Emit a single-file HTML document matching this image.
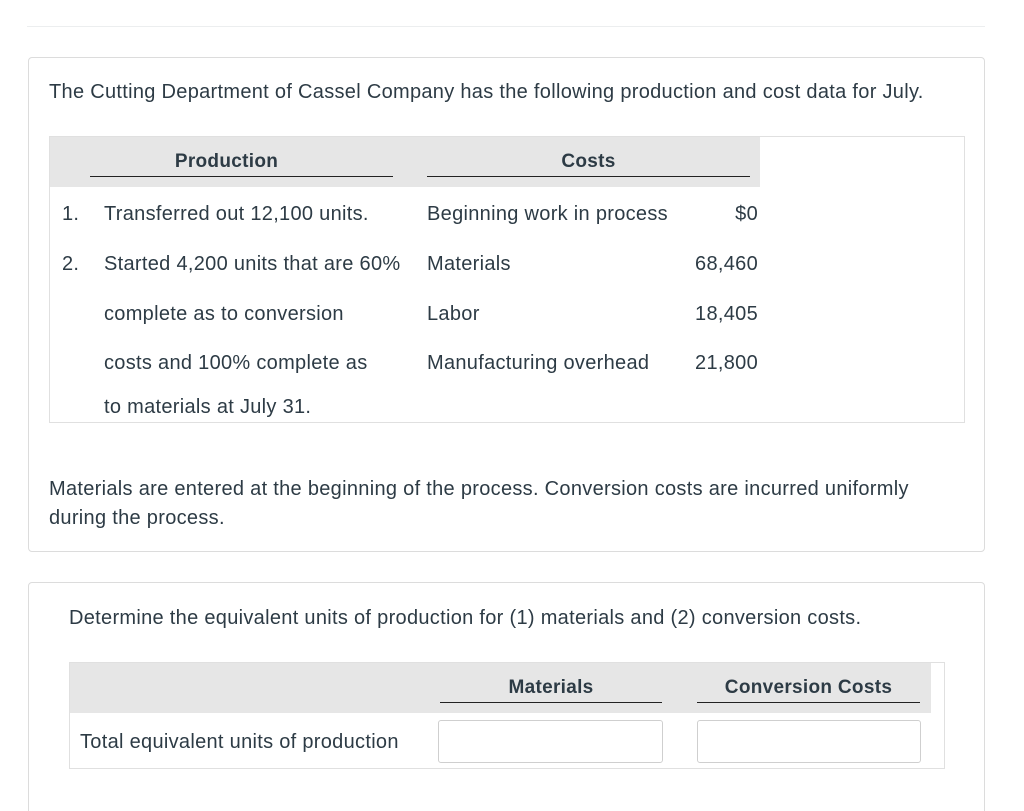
<!DOCTYPE html>
<html><head><style>
html,body{margin:0;width:1024px;height:811px;overflow:hidden;}
body{background:#fff;position:relative;font-family:"Liberation Sans",sans-serif;color:#2d3b45;}
.a{position:absolute;white-space:nowrap;font-size:20px;letter-spacing:0.3px;line-height:20px;}
.b{font-weight:bold;font-size:19px;letter-spacing:0.3px;}
.box{position:absolute;box-sizing:border-box;}
.r{text-align:right;}
</style></head><body>
<div class="box" style="left:27px;top:26px;width:958px;height:1px;background:#eceeef"></div>
<div class="box" style="left:28px;top:57px;width:957px;height:495px;border:1px solid #dcdcdc;border-radius:4px"></div>
<div class="a" style="left:49px;top:82px">The Cutting Department of Cassel Company has the following production and cost data for July.</div>
<div class="box" style="left:49px;top:136px;width:916px;height:287px;border:1px solid #e0e0e0"></div>
<div class="box" style="left:50px;top:137px;width:710px;height:50px;background:#e6e6e6"></div>
<div class="box" style="left:90px;top:176px;width:303px;height:1px;background:#222"></div>
<div class="box" style="left:427px;top:176px;width:323px;height:1px;background:#222"></div>
<div class="a b" style="left:75px;width:303px;text-align:center;top:152px">Production</div>
<div class="a b" style="left:427px;width:323px;text-align:center;top:152px">Costs</div>
<div class="a" style="left:62px;top:204px">1.</div>
<div class="a" style="left:104px;top:204px">Transferred out 12,100 units.</div>
<div class="a" style="left:62px;top:254px">2.</div>
<div class="a" style="left:104px;top:254px">Started 4,200 units that are 60%</div>
<div class="a" style="left:104px;top:304px">complete as to conversion</div>
<div class="a" style="left:104px;top:353px">costs and 100% complete as</div>
<div class="a" style="left:104px;top:397px">to materials at July 31.</div>
<div class="a" style="left:427px;top:204px">Beginning work in process</div>
<div class="a" style="left:427px;top:254px">Materials</div>
<div class="a" style="left:427px;top:304px">Labor</div>
<div class="a" style="left:427px;top:353px">Manufacturing overhead</div>
<div class="a r" style="left:660px;width:98px;top:204px">$0</div>
<div class="a r" style="left:660px;width:98px;top:254px">68,460</div>
<div class="a r" style="left:660px;width:98px;top:304px">18,405</div>
<div class="a r" style="left:660px;width:98px;top:353px">21,800</div>
<div class="a" style="left:49px;top:479px">Materials are entered at the beginning of the process. Conversion costs are incurred uniformly</div>
<div class="a" style="left:49px;top:508px">during the process.</div>

<div class="box" style="left:28px;top:582px;width:957px;height:240px;border:1px solid #dcdcdc;border-radius:4px"></div>
<div class="a" style="left:69px;top:608px">Determine the equivalent units of production for (1) materials and (2) conversion costs.</div>
<div class="box" style="left:69px;top:662px;width:876px;height:107px;border:1px solid #e0e0e0"></div>
<div class="box" style="left:70px;top:663px;width:861px;height:50px;background:#e6e6e6"></div>
<div class="box" style="left:440px;top:702px;width:222px;height:1px;background:#222"></div>
<div class="box" style="left:697px;top:702px;width:223px;height:1px;background:#222"></div>
<div class="a b" style="left:440px;width:222px;text-align:center;top:678px">Materials</div>
<div class="a b" style="left:697px;width:223px;text-align:center;top:678px">Conversion Costs</div>
<div class="a" style="left:80px;top:732px">Total equivalent units of production</div>
<div class="box" style="left:438px;top:720px;width:225px;height:43px;border:1px solid #cfcfcf;border-radius:3px"></div>
<div class="box" style="left:697px;top:720px;width:224px;height:43px;border:1px solid #cfcfcf;border-radius:3px"></div>
</body></html>
